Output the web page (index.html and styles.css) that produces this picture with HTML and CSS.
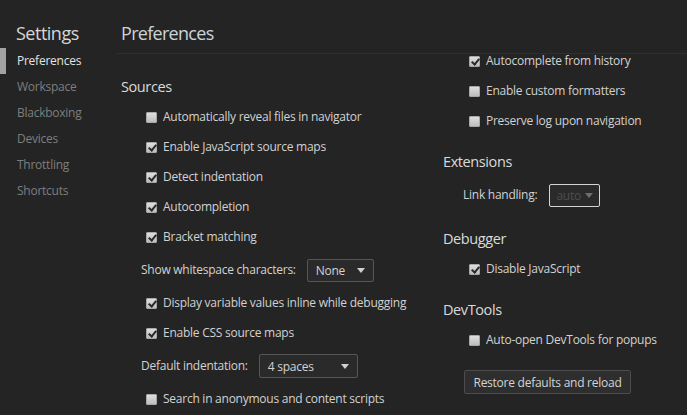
FILE: index.html
```html
<!DOCTYPE html>
<html>
<head>
<meta charset="utf-8">
<link rel="stylesheet" href="styles.css">
</head>
<body>
<div class="app">
  <aside class="sidebar">
    <div class="sidebar-title">Settings</div>
    <nav class="nav">
      <div class="nav-item active">Preferences</div>
      <div class="nav-item">Workspace</div>
      <div class="nav-item">Blackboxing</div>
      <div class="nav-item">Devices</div>
      <div class="nav-item">Throttling</div>
      <div class="nav-item">Shortcuts</div>
    </nav>
  </aside>
  <main class="main">
    <header class="main-header">Preferences</header>
    <div class="content">
      <div class="col col-left">
        <div class="section-title">Sources</div>
        <div class="row"><span class="cb"></span><span class="lbl">Automatically reveal files in navigator</span></div>
        <div class="row"><span class="cb checked"></span><span class="lbl">Enable JavaScript source maps</span></div>
        <div class="row"><span class="cb checked"></span><span class="lbl">Detect indentation</span></div>
        <div class="row"><span class="cb checked"></span><span class="lbl">Autocompletion</span></div>
        <div class="row"><span class="cb checked"></span><span class="lbl">Bracket matching</span></div>
        <div class="select-row"><span class="lbl">Show whitespace characters:</span><div class="select sel-none"><span>None</span><i class="arrow"></i></div></div>
        <div class="row"><span class="cb checked"></span><span class="lbl">Display variable values inline while debugging</span></div>
        <div class="row"><span class="cb checked"></span><span class="lbl">Enable CSS source maps</span></div>
        <div class="select-row"><span class="lbl">Default indentation:</span><div class="select sel-indent"><span>4 spaces</span><i class="arrow"></i></div></div>
        <div class="row"><span class="cb"></span><span class="lbl">Search in anonymous and content scripts</span></div>
      </div>
      <div class="col col-right">
        <div class="row row-top"><span class="cb checked"></span><span class="lbl">Autocomplete from history</span></div>
        <div class="row"><span class="cb"></span><span class="lbl">Enable custom formatters</span></div>
        <div class="row"><span class="cb"></span><span class="lbl">Preserve log upon navigation</span></div>
        <div class="section-title spaced">Extensions</div>
        <div class="select-row"><span class="lbl">Link handling:</span><div class="select sel-auto disabled"><span>auto</span><i class="arrow"></i></div></div>
        <div class="section-title spaced">Debugger</div>
        <div class="row"><span class="cb checked"></span><span class="lbl">Disable JavaScript</span></div>
        <div class="section-title spaced">DevTools</div>
        <div class="row"><span class="cb"></span><span class="lbl">Auto-open DevTools for popups</span></div>
        <div class="button-row"><button class="btn">Restore defaults and reload</button></div>
      </div>
    </div>
  </main>
</div>
</body>
</html>
```

FILE: styles.css
```css
* { box-sizing: border-box; }
html, body {
  margin: 0;
  height: 100%;
  background: #242424;
  overflow: hidden;
}
body {
  font-family: "Open Sans", "Noto Sans", sans-serif;
  font-size: 12px;
  letter-spacing: -0.25px;
  color: #d2d2d2;
}
.app {
  display: flex;
  height: 415px;
}
.sidebar {
  width: 117px;
  flex: none;
}
.sidebar-title {
  margin-top: 20px;
  padding-left: 16px;
  font-size: 18px;
  letter-spacing: -0.5px;
  line-height: 26px;
  color: #d6d6d6;
}
.nav {
  margin-top: 2px;
}
.nav-item {
  height: 26px;
  line-height: 26px;
  padding-left: 11px;
  border-left: 6px solid transparent;
  color: #7e7e7e;
}
.nav-item.active {
  border-left-color: #a2a2a2;
  color: #e2e2e2;
}
.main {
  flex: 1;
  display: flex;
  flex-direction: column;
  min-width: 0;
}
.main-header {
  height: 54px;
  padding: 20px 0 0 4px;
  font-size: 18px;
  letter-spacing: -0.7px;
  line-height: 26px;
  color: #cbd3d9;
  border-bottom: 1px solid #2f2f2f;
}
.content {
  flex: 1;
  display: flex;
}
.col-left {
  width: 326px;
  flex: none;
  padding-left: 4px;
  padding-top: 18px;
}
.col-right {
  flex: 1;
  padding-top: 1px;
}
.section-title {
  height: 30px;
  line-height: 30px;
  font-size: 14.5px;
  letter-spacing: -0.4px;
  color: #dadada;
}
.section-title.spaced {
  margin-top: 11px;
}
.row {
  height: 30px;
  display: flex;
  align-items: center;
  padding-left: 25px;
  gap: 6px;
}
.col-right .row.row-top {
  height: 12px;
  margin-bottom: 9px;
}
.lbl {
  line-height: 14px;
}
.col-right .row {
  padding-left: 26px;
}
.cb {
  width: 11px;
  height: 11px;
  flex: none;
  position: relative;
  background: linear-gradient(#dedede, #bdbdbd);
  border: 1px solid #a8a8a8;
  border-radius: 1px;
}
.cb.checked::after {
  content: "";
  position: absolute;
  left: 2.5px;
  top: 0px;
  width: 3px;
  height: 6px;
  border-right: 2px solid #2a2a2a;
  border-bottom: 2px solid #2a2a2a;
  transform: rotate(40deg);
}
.select-row {
  height: 36px;
  display: flex;
  align-items: center;
  padding-left: 20px;
  gap: 11px;
}
.select {
  height: 23px;
  display: flex;
  align-items: center;
  justify-content: space-between;
  padding: 0 8px 0 8px;
  background: #2a2a2a;
  border: 1px solid #565656;
  border-radius: 2px;
  color: #d2d2d2;
}
.arrow {
  width: 0;
  height: 0;
  border-left: 4px solid transparent;
  border-right: 4px solid transparent;
  border-top: 5px solid #d0d0d0;
}
.sel-none { width: 67px; }
.sel-indent { width: 99px; height: 24px; }
.sel-auto {
  width: 51px;
  border-color: #d4d4d4;
  padding: 0 6px;
  margin-left: 1px;
}
.select.disabled { color: #4e4e4e; }
.select.disabled .arrow { border-top-color: #6e6e6e; }
.button-row {
  padding-left: 21px;
  margin-top: 15px;
}
.btn {
  height: 24px;
  width: 167px;
  padding: 0;
  font-family: inherit;
  font-size: 12px;
  letter-spacing: -0.25px;
  color: #d4d4d4;
  background: #2e2e2e;
  border: 1px solid #4c4c4c;
  border-radius: 2px;
}
```
